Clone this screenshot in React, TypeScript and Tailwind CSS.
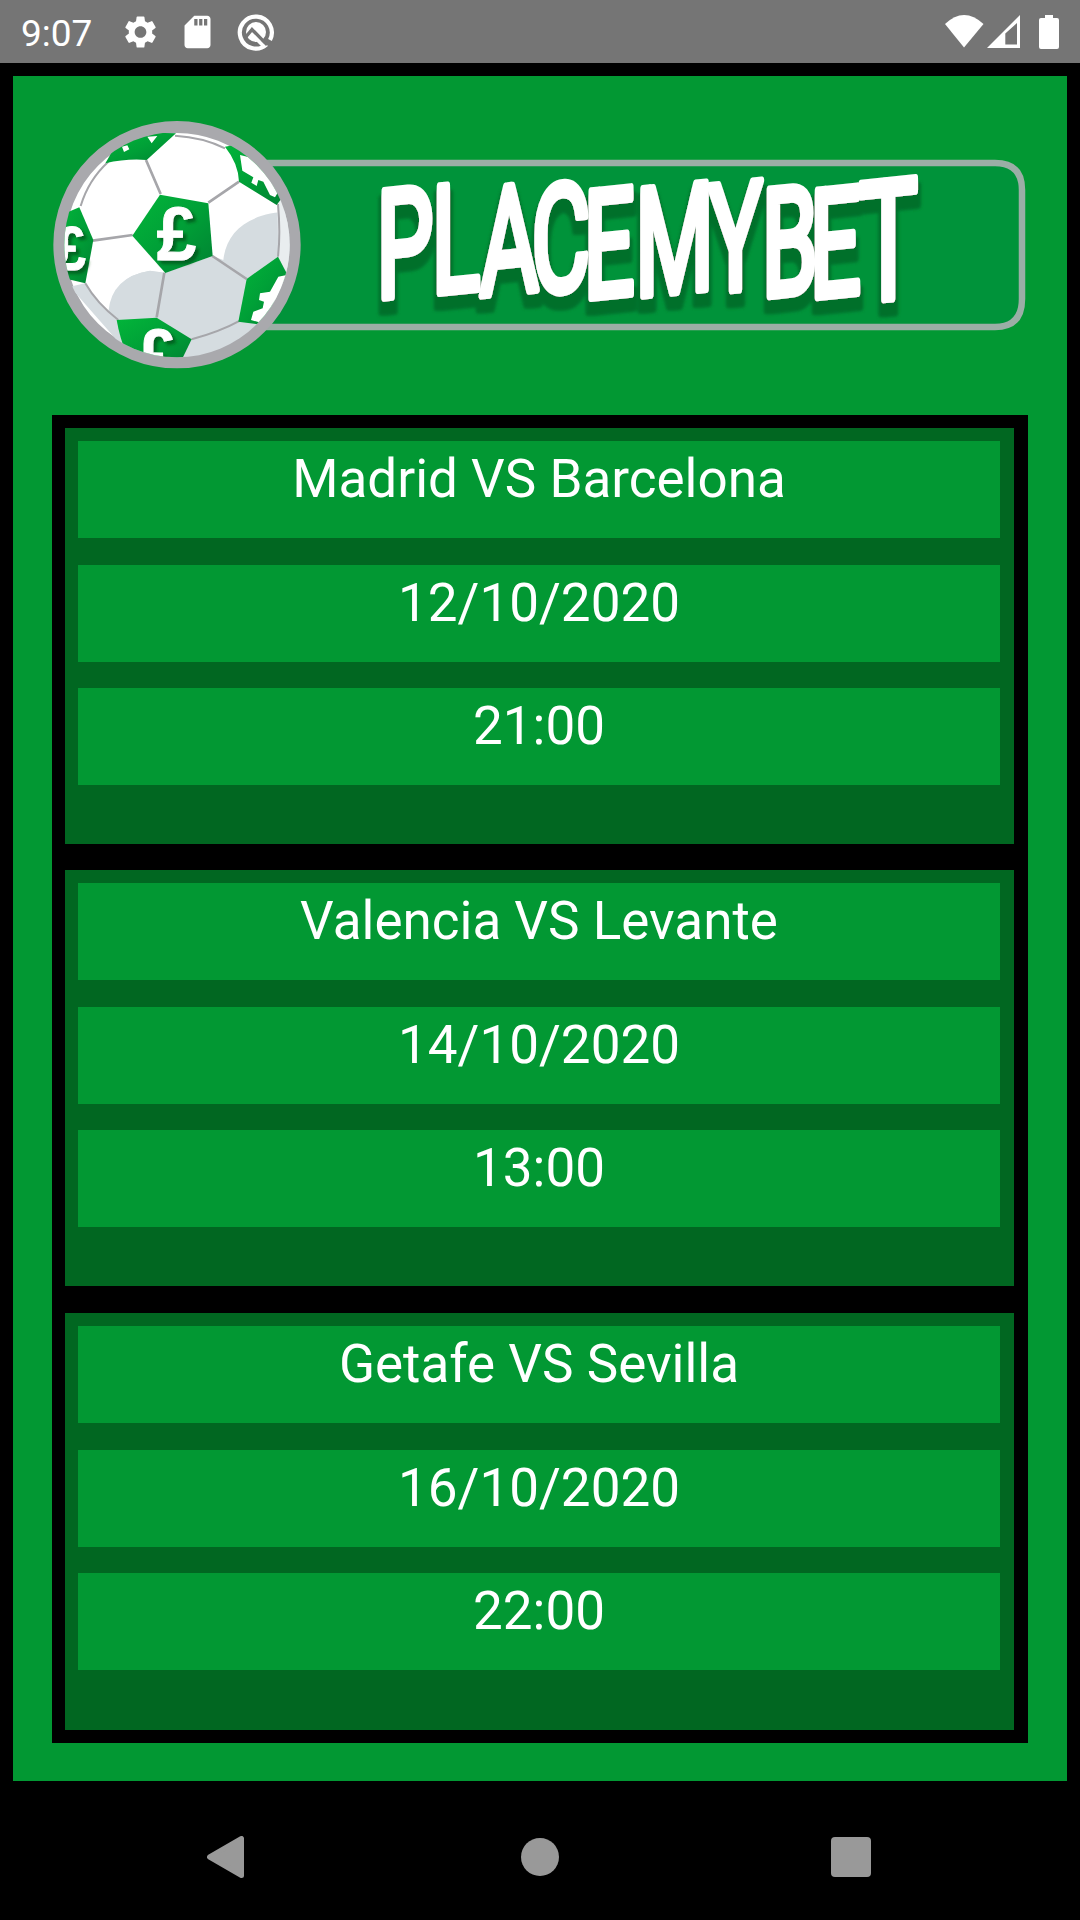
import React from "react";
import { MdSettings, MdSdCard } from "react-icons/md";

const matches = [
  { teams: "Madrid VS Barcelona", date: "12/10/2020", time: "21:00" },
  { teams: "Valencia VS Levante", date: "14/10/2020", time: "13:00" },
  { teams: "Getafe VS Sevilla", date: "16/10/2020", time: "22:00" },
];

function StatusBar() {
  return (
    <header className="flex h-[63px] shrink-0 items-center bg-[#757575] pl-[21px] pr-[21px] text-white">
      <span className="w-[100px] pt-[4px] text-[37px] leading-[44px]">9:07</span>
      <MdSettings className="h-[40px] w-[39px]" />
      <MdSdCard className="ml-[18px] h-[40px] w-[39px]" />
      <svg className="ml-[20px] h-[38px] w-[38px]" viewBox="0 0 38 38">
        <path d="M29.5 31.5 A16 16 0 1 1 33 27" fill="none" stroke="white" strokeWidth="4.2" />
        <circle cx="19" cy="19" r="10" fill="white" />
        <path d="M8 25 L15 16.5 L30 32" fill="none" stroke="#757575" strokeWidth="3.4" />
        <path d="M17 23.5 L28 34.5" fill="none" stroke="white" strokeWidth="3.4" />
      </svg>
      <div className="flex-1" />
      <svg className="h-[34px] w-[115px]" viewBox="0 0 115 34" fill="white">
        <path d="M1 9 Q20 -9 39.500 9 L20 32.500Z" />
        <path fillRule="evenodd" d="M43 33 L76 0 V33Z M61.300 18.500 V29.500 H73 V8Z" />
        <path d="M101 0 h8 v3 h4 a2 2 0 0 1 2 2 v27 a2 2 0 0 1 -2 2 h-16 a2 2 0 0 1 -2 -2 v-27 a2 2 0 0 1 2 -2 h4z" />
      </svg>
    </header>
  );
}

function Ball() {
  return (
    <g transform="scale(.33333)">
      <defs>
        <clipPath id="ball">
          <circle cx="411" cy="434" r="338" />
        </clipPath>
        <linearGradient id="patch" x1="0" y1="0" x2="1" y2="1">
          <stop offset="0" stopColor="#02b53a" />
          <stop offset="0.5" stopColor="#00a037" />
          <stop offset="1" stopColor="#008232" />
        </linearGradient>
        <filter id="soft">
          <feDropShadow dx="10" dy="10" stdDeviation="5" floodColor="#00521f" floodOpacity="0.8" />
        </filter>
      </defs>
      <circle cx="411" cy="434" r="353" fill="#fff" stroke="#a9a9ad" strokeWidth="36" />
      <g clipPath="url(#ball)">
        <path d="M550 480 C560 385 640 330 780 335 V800 H300 L90 560 L135 550 L235 660 C170 630 195 520 330 512 L375 518 L518 468Z" fill="#d5dce0" />
        <path d="M135 550 Q170 615 235 660 L210 640 Q215 530 330 512 L375 518 L160 420Z" fill="#fff" />
        <path d="M375 518 L330 512 Q215 530 205 635 L235 660 L350 652Z" fill="#d5dce0" />
        <path d="M712 310 L715 470 L740 520 L780 400 L730 290Z" fill="#e9edef" />
        <g fill="none" stroke="#a6a6aa" strokeWidth="8" strokeLinejoin="round">
          <path d="M318 180 L362 282 M505 308 L597 245 M278 405 L158 422 M517 468 L620 537 M373 518 L350 652" />
          <path d="M122 318 Q145 240 205 185 M136 550 Q170 610 235 660 M455 718 Q540 695 600 662 M714 312 Q722 400 714 470 M405 107 Q490 112 555 145" strokeWidth="6" />
        </g>
        <g fill="url(#patch)">
          <path d="M360 284 L505 310 L518 468 L376 519 L277 407Z" />
          <path d="M196 190 L225 140 L340 98 L408 100 L320 180 Q260 175 196 190Z" />
          <path d="M555 140 L610 130 L725 295 L710 315 L597 245Q595 190 555 140Z" />
          <path d="M118 322 L160 420 L136 550 L50 530 L50 350Z" />
          <path d="M230 660 L350 653 L455 718 L420 790 H270 Q240 720 230 660Z" />
          <path d="M714 470 L740 520 L670 675 L595 665 L620 537Z" />
        </g>
        <g fill="white" stroke="white" strokeWidth="3" fontFamily="Liberation Sans" fontWeight="700" filter="url(#soft)">
          <text x="350" y="481" fontSize="228" textLength="118" lengthAdjust="spacingAndGlyphs">£</text>
          <text x="46" y="510" fontSize="190" textLength="92" lengthAdjust="spacingAndGlyphs">£</text>
          <text x="292" y="840" fontSize="214" textLength="116" lengthAdjust="spacingAndGlyphs">£</text>
        </g>
        <g fill="#fff">
          <path d="M600 165 L640 175 L715 275 L705 292 L690 285 L670 245 L655 240 L650 258 L634 248 L640 232 L607 212Z" />
          <path d="M740 525 L715 530 L690 575 L660 580 L657 600 L672 605 L668 625 L640 635 L633 660 L675 672Z" />
          <path d="M322 110 L352 108 L335 130Z M246 140 L262 136 L268 148 L252 156Z" />
        </g>
      </g>
    </g>
  );
}

function Logo() {
  return (
    <svg className="ml-[27px] mt-[24px] h-[290px] w-[1000px] shrink-0" viewBox="0 0 1000 290">
      <defs>
        <filter id="shade" x="-5%" y="-20%" width="110%" height="150%">
          <feMorphology in="SourceAlpha" operator="dilate" radius="3" result="fat" />
          <feOffset in="fat" dx="0" dy="11" result="moved" />
          <feGaussianBlur in="moved" stdDeviation="1.5" result="blurred" />
          <feFlood floodColor="#00702b" />
          <feComposite in2="blurred" operator="in" result="shadow" />
          <feMerge>
            <feMergeNode in="shadow" />
            <feMergeNode in="SourceGraphic" />
          </feMerge>
        </filter>
      </defs>
      <path d="M200 63 H955 Q982 63 982 90 V199 Q982 227 955 227 H200Z" fill="#00933a" stroke="#9baea6" strokeWidth="6.500" />
      <Ball />
      <g filter="url(#shade)">
        <text
          transform="skewY(-6) scale(.6 1)"
          fontFamily="Roboto"
          fontWeight="400"
          fontSize="150"
          fill="white"
          stroke="white"
          strokeWidth="8"
          strokeLinejoin="round"
          x="561 653 733 819 906 992 1114 1203 1283 1364"
          y="234 235 242 246 256 259 263 273 279 288"
        >
          PLACEMYBE<tspan fontSize="166">T</tspan>
        </text>
      </g>
    </svg>
  );
}

function Row({ children, className = "" }: { children: React.ReactNode; className?: string }) {
  return (
    <div className={`h-[97px] bg-[#029833] pt-[7px] text-center text-[53px] leading-[63px] text-white ${className}`}>
      {children}
    </div>
  );
}

export default function App() {
  return (
    <div className="flex h-[1920px] w-[1080px] flex-col overflow-hidden bg-black font-['Roboto',sans-serif]">
      <StatusBar />
      <main className="mx-[13px] mt-[13px] flex h-[1705px] shrink-0 flex-col bg-[#029833]">
        <Logo />
        <section className="ml-[39px] mt-[25px] flex h-[1328px] w-[976px] shrink-0 flex-col bg-black py-[13px] pl-[13px] pr-[14px]">
          {matches.map((m) => (
            <article key={m.teams} className="mb-[26px] h-[416px] shrink-0 bg-[#016721] pl-[13px] pr-[14px] pt-[13px] last:mb-0 last:mt-px last:h-[417px]">
              <Row>{m.teams}</Row>
              <Row className="mt-[27px]">{m.date}</Row>
              <Row className="mt-[26px]">{m.time}</Row>
            </article>
          ))}
        </section>
      </main>
      <nav className="flex flex-1 items-center bg-black pl-[207px] pt-[13px] text-[#999]">
        <svg className="h-[42px] w-[37px]" viewBox="0 0 37 42">
          <path d="M2.500 21 L34.500 2.500 V39.500Z" fill="currentColor" stroke="currentColor" strokeWidth="5" strokeLinejoin="round" />
        </svg>
        <div className="ml-[277px] h-[38px] w-[38px] rounded-full bg-current" />
        <div className="ml-[272px] h-[40px] w-[40px] rounded-[4px] bg-current" />
      </nav>
    </div>
  );
}
